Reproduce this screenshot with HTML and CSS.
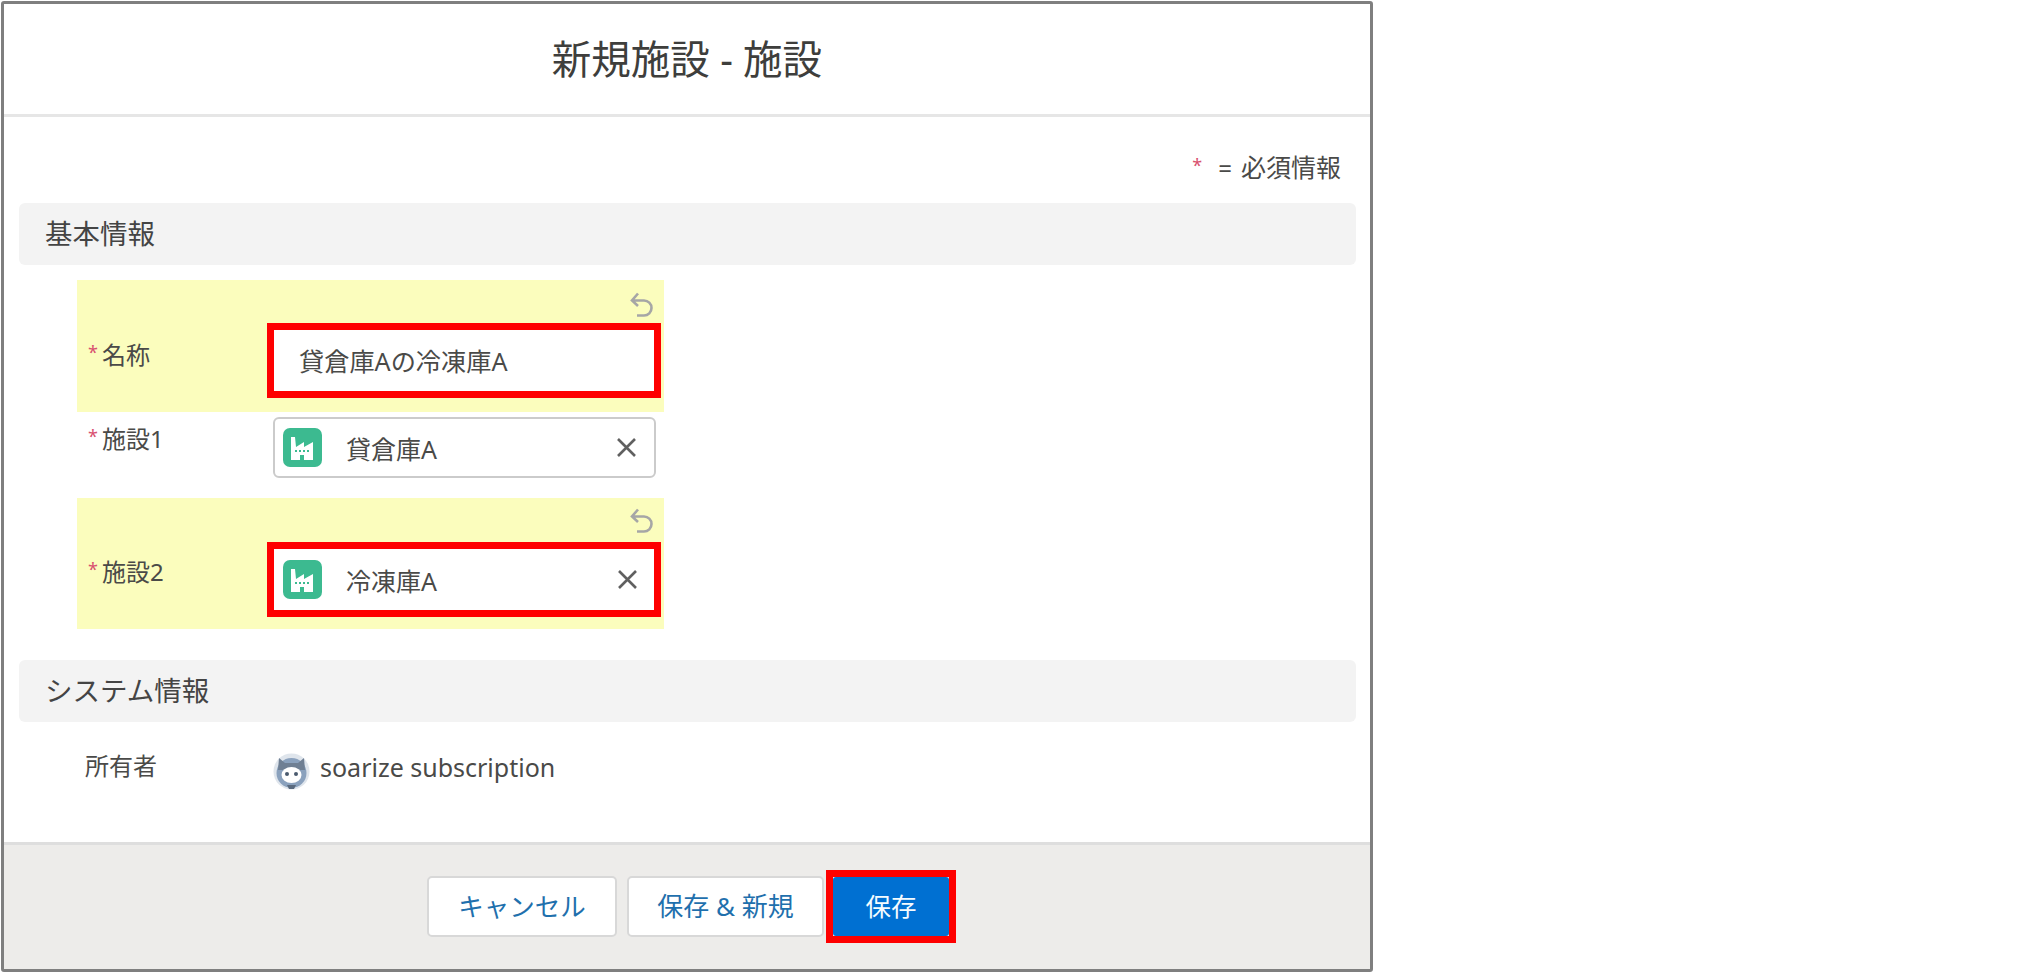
FILE: index.html
```html
<!DOCTYPE html>
<html lang="ja">
<head>
<meta charset="utf-8">
<title>新規施設 - 施設</title>
<link rel="stylesheet" href="styles.css">
</head>
<body>
<div class="dialog">
  <header class="dialog-head"><h1>新規施設 - 施設</h1></header>
  <main class="dialog-body">
    <p class="required"><span class="star">*</span><span class="eq">=</span>必須情報</p>
    <h2 class="section">基本情報</h2>
    <div class="rows">
      <div class="row edited first">
        <div class="tools">
          <svg class="undo" viewBox="0 0 25 25"><path d="M9 1.500 3 8.500 9 14M3.500 8.500H15a7.500 7.500 0 0 1 0 15H8"/></svg>
        </div>
        <div class="main">
          <div class="label name-label"><span class="star">*</span>名称</div>
          <div class="marked input-text">貸倉庫Aの冷凍庫A</div>
        </div>
      </div>
      <div class="row plain">
        <div class="main">
          <div class="label plain-label"><span class="star">*</span>施設1</div>
          <div class="lookup bordered">
            <svg class="factory" viewBox="0 0 39 39"><rect width="39" height="39" rx="7" fill="#3cba90"/><path fill="#fff" d="M8 9h4l1 10 8-5v5l9-5v18H8z"/><path fill="#3cba90" d="M12 22h2v2h-2zM16 22h2v2h-2zM20 22h2v2h-2zM24 22h2v2h-2zM17 27h4v5h-4z"/></svg>
            <span class="lookup-text">貸倉庫A</span>
            <svg class="close" viewBox="0 0 21 21"><path d="M2 2l17 17M19 2 2 19"/></svg>
          </div>
        </div>
      </div>
      <div class="row edited last">
        <div class="tools">
          <svg class="undo" viewBox="0 0 25 25"><path d="M9 1.500 3 8.500 9 14M3.500 8.500H15a7.500 7.500 0 0 1 0 15H8"/></svg>
        </div>
        <div class="main">
          <div class="label last-label"><span class="star">*</span>施設2</div>
          <div class="marked lookup">
            <svg class="factory" viewBox="0 0 39 39"><rect width="39" height="39" rx="7" fill="#3cba90"/><path fill="#fff" d="M8 9h4l1 10 8-5v5l9-5v18H8z"/><path fill="#3cba90" d="M12 22h2v2h-2zM16 22h2v2h-2zM20 22h2v2h-2zM24 22h2v2h-2zM17 27h4v5h-4z"/></svg>
            <span class="lookup-text">冷凍庫A</span>
            <svg class="close" viewBox="0 0 21 21"><path d="M2 2l17 17M19 2 2 19"/></svg>
          </div>
        </div>
      </div>
    </div>
    <h2 class="section second">システム情報</h2>
    <div class="owner">
      <div class="owner-label">所有者</div>
      <svg class="avatar" viewBox="0 0 37 37">
        <circle cx="18.500" cy="18.500" r="18" fill="#dfe5ec"/>
        <circle cx="18.500" cy="20" r="15" fill="#8aa1bd"/>
        <path fill="#6f7f93" d="M6 5l6 5h13l6-5 1 12H5z"/>
        <ellipse cx="18.500" cy="22" rx="10" ry="8" fill="#fff"/>
        <circle cx="14" cy="21" r="2" fill="#4a5a6e"/><circle cx="23" cy="21" r="2" fill="#4a5a6e"/>
        <path fill="#5a6a7e" d="M14 32h9l-2 4h-5z"/>
      </svg>
      <span class="owner-name">soarize subscription</span>
    </div>
  </main>
  <footer class="dialog-foot">
    <button class="btn cancel">キャンセル</button>
    <button class="btn save-new">保存 &amp; 新規</button>
    <div class="marked-btn"><button class="btn save">保存</button></div>
  </footer>
</div>
</body>
</html>
```
FILE: styles.css
```css
* { box-sizing: border-box; }
html, body { margin: 0; height: 100%; background: #fff; }
body {
  padding: 1px 0 0 1px;
  font-family: "Noto Sans", "Noto Sans CJK JP", sans-serif;
  color: #4a4a48;
}
.dialog {
  width: 1372px;
  height: 971px;
  border: 3px solid #7f7f7f;
  border-radius: 3px;
  display: flex;
  flex-direction: column;
  overflow: hidden;
}
.dialog-head {
  height: 113px;
  border-bottom: 3px solid #e6e6e6;
  display: flex;
  align-items: center;
  justify-content: center;
  flex: none;
}
.dialog-head h1 { margin: 0; font-weight: 400; font-size: 39.500px; line-height: 50px; color: #3e3e3c; }
.dialog-body { flex: 1; padding-top: 34px; min-height: 0; }
.required {
  margin: 0 29px 20px 0;
  height: 32px;
  line-height: 32px;
  font-size: 25px;
  text-align: right;
}
.star { color: #d8516f; font-size: 18px; position: relative; top: -5px; }
.eq { margin: 0 9px 0 16px; font-size: 24px; }
.section {
  margin: 0 14px 0 15px;
  height: 62px;
  line-height: 62px;
  padding-left: 26px;
  background: #f3f3f3;
  border-radius: 6px;
  font-weight: 400;
  font-size: 27.500px;
  color: #444;
}
.section.second { margin-top: 31px; }
.rows { margin: 15px 0 0 73px; width: 587px; }
.row.edited { background: #fbfdbd; }
.row.first { padding: 12px 0 14px; }
.row.plain { height: 86px; padding-top: 5px; }
.row.last { padding: 10px 0 12px; }
.tools { display: flex; justify-content: flex-end; padding-right: 10px; height: 25px; margin-bottom: 6px; }
.row.last .tools { margin-bottom: 9px; }
.undo { width: 25px; height: 25px; fill: none; stroke: #a6a6a6; stroke-width: 2.600; }
.main { display: grid; grid-template-columns: 190px 394px; align-items: start; }
.label { padding-left: 11px; font-size: 24px; line-height: 32px; }
.label .star { margin-right: 4px; }
.name-label { margin-top: 16px; }
.plain-label { margin-top: 6px; }
.last-label { margin-top: 14px; }
.marked {
  height: 75px;
  border: 7px solid #fe0000;
  background: #fff;
}
.input-text { padding-left: 25px; font-size: 25.200px; line-height: 62px; }
.lookup { display: flex; align-items: center; padding-left: 9px; padding-right: 16px; font-size: 25px; }
.lookup.bordered {
  margin-left: 6px;
  width: 383px;
  height: 61px;
  background: #fff;
  border: 2px solid #cbcbcb;
  border-radius: 6px;
  padding-left: 8px;
  padding-right: 17px;
}
.factory { width: 39px; height: 39px; flex: none; }
.lookup-text { flex: 1; margin-left: 24px; }
.close { width: 21px; height: 21px; flex: none; fill: none; stroke: #606060; stroke-width: 2.600; }
.owner { display: flex; align-items: center; margin-top: 31px; height: 37px; }
.owner-label { width: 269px; padding-left: 81px; font-size: 24px; line-height: 32px; margin-top: -12px; }
.avatar { width: 37px; height: 37px; flex: none; }
.owner-name { margin-left: 10px; font-size: 25px; line-height: 32px; margin-top: -10px; }
.dialog-foot {
  flex: none;
  height: 127px;
  border-top: 3px solid #dedede;
  background: #edecea;
  display: flex;
  align-items: center;
  justify-content: center;
  padding: 0 0 2px 9px;
}
.btn {
  height: 61px;
  border: 2px solid #d8d8d8;
  border-radius: 5px;
  background: #fff;
  color: #1f70ad;
  font-family: inherit;
  font-size: 25.500px;
  padding: 0 0 3px;
}
.cancel { width: 190px; margin-right: 10px; }
.save-new { width: 197px; margin-right: 2px; font-size: 26px; }
.marked-btn { border: 7px solid #fe0000; height: 73px; width: 130px; }
.save { display: block; width: 116px; height: 59px; border: 0; border-radius: 3px; background: #0070d2; color: #f4fbff; font-size: 25.500px; }
```
